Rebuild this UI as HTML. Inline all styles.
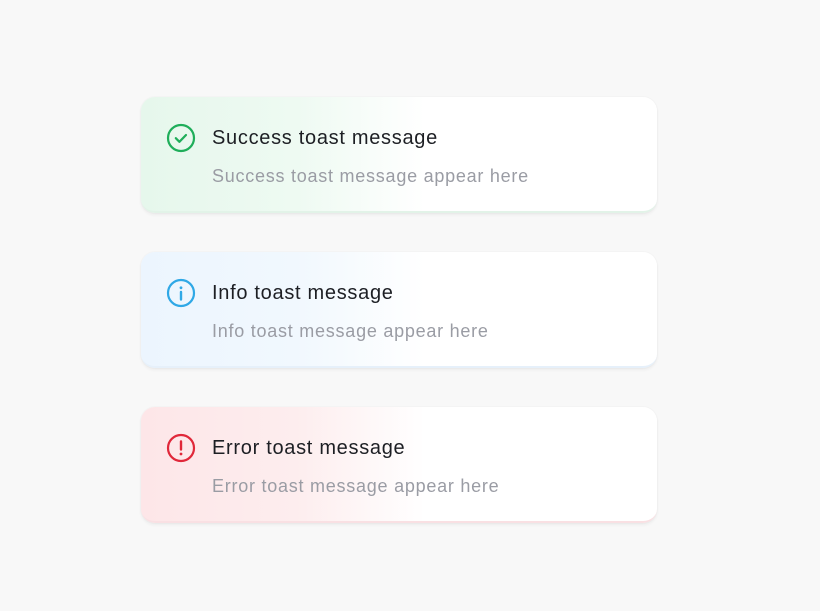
<!DOCTYPE html>
<html><head><style>
html,body{margin:0;padding:0;width:820px;height:611px;background:#f8f8f8;font-family:"Liberation Sans",sans-serif;overflow:hidden}
.card{position:absolute;left:141px;width:516px;height:114px;border-radius:14px;box-shadow:0 2px 3px rgba(0,0,0,0.05),0 0 0 1px rgba(0,0,0,0.015)}
.ic{position:absolute;left:25px;top:26px;width:30px;height:30px}
.t{position:absolute;left:71px;top:30px;font-size:20px;color:#1d1f24;letter-spacing:0.7px}
.s{position:absolute;left:71px;top:69px;font-size:18px;color:#9a9ca4;letter-spacing:0.75px}
</style></head><body>
<div class="card" style="top:97px;background:linear-gradient(90deg,#e6f7ec 0%,#eefaf2 30%,#fff 55%,#fff 100%);border-bottom:2px solid #e2f3e8">
<svg class="ic" viewBox="0 0 30 30"><circle cx="15" cy="15" r="13" fill="none" stroke="#1fae5a" stroke-width="2.2"/><path d="M9.8 15.2l3.6 3.6 6.6-6.8" fill="none" stroke="#1fae5a" stroke-width="2.2" stroke-linecap="round" stroke-linejoin="round"/></svg>
<div class="t">Success toast message</div><div class="s">Success toast message appear here</div></div>
<div class="card" style="top:252px;background:linear-gradient(90deg,#ecf5fe 0%,#f1f8fe 30%,#fff 55%,#fff 100%);border-bottom:2px solid #e6f0fa">
<svg class="ic" viewBox="0 0 30 30"><circle cx="15" cy="15" r="13" fill="none" stroke="#2fa8e6" stroke-width="2.2"/><circle cx="15" cy="9.8" r="1.4" fill="#2fa8e6"/><path d="M15 14v7.5" stroke="#2fa8e6" stroke-width="2.4" stroke-linecap="round"/></svg>
<div class="t">Info toast message</div><div class="s">Info toast message appear here</div></div>
<div class="card" style="top:407px;background:linear-gradient(90deg,#fde6e8 0%,#fdedee 30%,#fff 55%,#fff 100%);border-bottom:2px solid #f9e0e3">
<svg class="ic" viewBox="0 0 30 30"><circle cx="15" cy="15" r="13" fill="none" stroke="#e0283a" stroke-width="2.2"/><path d="M15 8.5v8" stroke="#e0283a" stroke-width="2.4" stroke-linecap="round"/><circle cx="15" cy="21" r="1.4" fill="#e0283a"/></svg>
<div class="t">Error toast message</div><div class="s">Error toast message appear here</div></div>
</body></html>
